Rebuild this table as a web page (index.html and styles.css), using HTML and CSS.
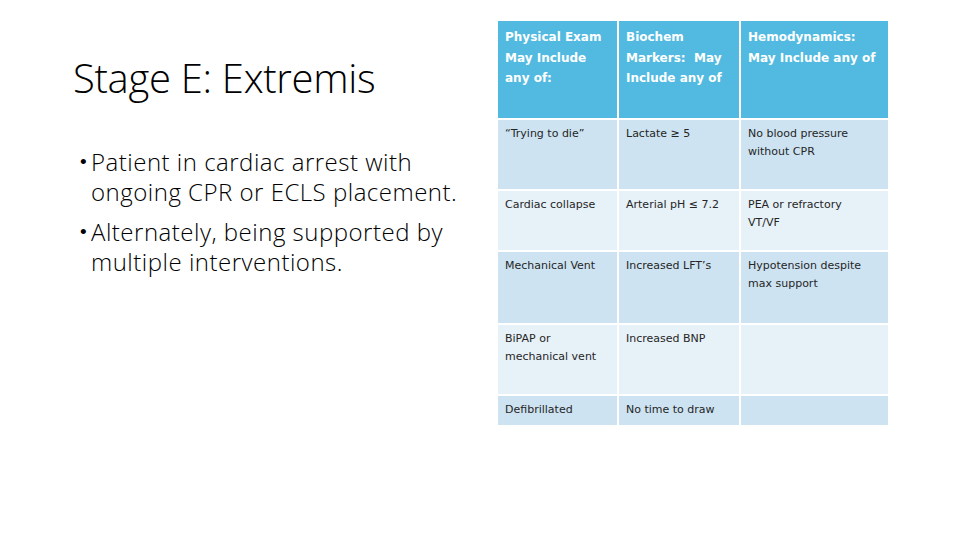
FILE: index.html
```html
<!DOCTYPE html>
<html>
<head>
<meta charset="utf-8">
<link rel="stylesheet" href="styles.css">
</head>
<body>
<div class="slide">
  <div class="left">
    <h1 class="title">Stage E: Extremis</h1>
    <ul class="bullets">
      <li>Patient in cardiac arrest with ongoing CPR or ECLS placement.</li>
      <li>Alternately, being supported by multiple interventions.</li>
    </ul>
  </div>
  <table class="grid">
    <colgroup><col class="c1"><col class="c2"><col class="c3"></colgroup>
    <tr class="head">
      <th>Physical Exam<br>May Include<br>any of:</th>
      <th>Biochem<br>Markers:&nbsp; May<br>Include any of</th>
      <th>Hemodynamics:<br>May Include any of</th>
    </tr>
    <tr class="odd r1">
      <td>“Trying to die”</td>
      <td>Lactate ≥ 5</td>
      <td>No blood pressure<br>without CPR</td>
    </tr>
    <tr class="even r2">
      <td>Cardiac collapse</td>
      <td>Arterial pH ≤ 7.2</td>
      <td>PEA or refractory<br>VT/VF</td>
    </tr>
    <tr class="odd r3">
      <td>Mechanical Vent</td>
      <td>Increased LFT’s</td>
      <td>Hypotension despite<br>max support</td>
    </tr>
    <tr class="even r4">
      <td>BiPAP or<br>mechanical vent</td>
      <td>Increased BNP</td>
      <td></td>
    </tr>
    <tr class="odd r5">
      <td>Defibrillated</td>
      <td>No time to draw</td>
      <td></td>
    </tr>
  </table>
</div>
</body>
</html>
```
FILE: styles.css
```css
html, body {
  margin: 0;
  padding: 0;
  background: #ffffff;
}
.slide {
  width: 960px;
  height: 540px;
  display: flex;
  align-items: flex-start;
  box-sizing: border-box;
  padding: 19px 0 0 73px;
  overflow: hidden;
}
.left {
  width: 420px;
  flex: none;
  padding-top: 35px;
}
.title {
  margin: 0;
  font-family: "Open Sans", "Liberation Sans", sans-serif;
  font-weight: 300;
  font-size: 40px;
  line-height: 48px;
  color: #000;
  letter-spacing: -0.3px;
}
.bullets {
  list-style: none;
  margin: 45px 0 0 7px;
  padding: 0;
  font-family: "Open Sans", "Liberation Sans", sans-serif;
  font-weight: 300;
  font-size: 24px;
  line-height: 30px;
  letter-spacing: 0.5px;
  color: #000;
  width: 380px;
}
.bullets li {
  position: relative;
  padding-left: 11px;
  margin-bottom: 10px;
}
.bullets li::before {
  content: "•";
  position: absolute;
  left: 0;
  top: 0;
  font-family: "Liberation Sans", sans-serif;
  font-weight: normal;
  font-size: 19px;
  line-height: 30px;
}
.grid {
  margin-left: 3px;
  border-collapse: collapse;
  table-layout: fixed;
  width: 392px;
  font-family: "DejaVu Sans", "Liberation Sans", sans-serif;
}
.c1 { width: 121px; }
.c2 { width: 122px; }
.c3 { width: 149px; }
.grid th, .grid td {
  border: 2px solid #ffffff;
  vertical-align: top;
  text-align: left;
  padding: 6px 6px 0 7px;
  white-space: nowrap;
}
.grid th {
  background: #52bae0;
  color: #ffffff;
  font-weight: bold;
  font-size: 12px;
  line-height: 20.5px;
  padding-top: 6px;
}
.grid td {
  font-size: 11px;
  line-height: 18px;
  color: #262626;
  padding-top: 5px;
}
.head { height: 99px; }
.r1 { height: 71px; }
.r2 { height: 61px; }
.r3 { height: 73px; }
.r4 { height: 71px; }
.r5 { height: 31px; }
.odd td { background: #cde3f1; }
.even td { background: #e7f1f8; }
```
